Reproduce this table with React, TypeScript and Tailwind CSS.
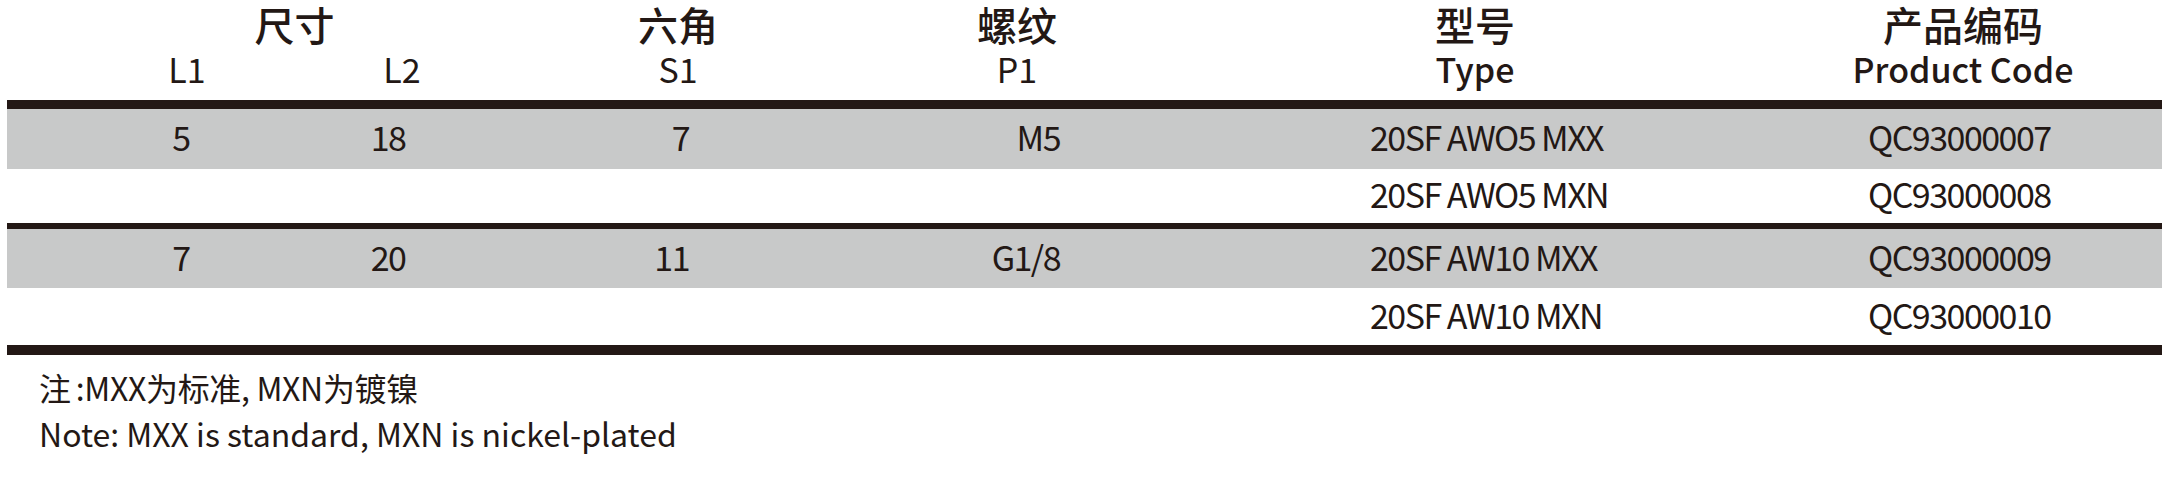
import React from "react";

const headCols = [
  { en: "L1", cls: "ml-[80px] w-[200px] font-normal" },
  { en: "L2", cls: "ml-[15px] w-[200px] font-normal" },
  { en: "S1", cls: "ml-[76px] w-[200px] font-normal" },
  { en: "P1", cls: "ml-[139px] w-[200px] font-normal" },
  { en: "Type", cls: "ml-[208px] w-[300px] font-medium" },
  { en: "Product Code", cls: "ml-[188px] w-[300px] font-medium" },
];

const bodyCols = [
  "ml-[74px] w-[200px] text-center",
  "ml-[7px] w-[200px] text-center",
  "ml-[1px] w-[200px] text-right",
  "ml-[171px] w-[200px] text-right",
  "ml-[310px] w-[400px] text-left",
  "ml-[98px] w-[300px] text-left",
];

const groups = [
  {
    spec: ["5", "18", "7", "M5"],
    rows: [
      ["20SF AWO5 MXX", "QC93000007"],
      ["20SF AWO5 MXN", "QC93000008"],
    ],
  },
  {
    spec: ["7", "20", "11", "G1/8"],
    rows: [
      ["20SF AW10 MXX", "QC93000009"],
      ["20SF AW10 MXN", "QC93000010"],
    ],
  },
];

function Row({ cells, gray, h }: { cells: string[]; gray: boolean; h: string }) {
  return (
    <div className={`flex items-center pb-[4px] ${h} ${gray ? "bg-[#c8c9c9]" : "bg-white"}`}>
      {bodyCols.map((cls, i) => (
        <div key={i} className={`${cls} shrink-0 leading-[40px]`}>
          {cells[i] ?? ""}
        </div>
      ))}
    </div>
  );
}

export default function App() {
  return (
    <div className="w-[2164px] h-[494px] bg-white text-[#231815] font-['Noto_Sans_CJK_SC',sans-serif] overflow-hidden">
      <div className="ml-[7px] w-[2155px]">
        {/* header */}
        <div className="h-[100px] pt-[1px]">
          <div className="flex h-[46px] text-[40px] leading-[46px] font-medium">
            <div className="ml-[80px] w-[415px] text-center shrink-0">尺寸</div>
            <div className="ml-[76px] w-[200px] text-center shrink-0">六角</div>
            <div className="ml-[139px] w-[200px] text-center shrink-0">螺纹</div>
            <div className="ml-[208px] w-[300px] text-center shrink-0">型号</div>
            <div className="ml-[188px] w-[300px] text-center shrink-0">产品编码</div>
          </div>
          <div className="flex h-[44px] text-[34px] leading-[44px]">
            {headCols.map((c, i) => (
              <div key={i} className={`${c.cls} text-center shrink-0`}>
                {c.en}
              </div>
            ))}
          </div>
        </div>

        {/* body */}
        <div className="text-[34px] tracking-[-0.045em]">
          <div className="h-[9px] bg-[#231815]" />
          <Row cells={[...groups[0].spec, ...groups[0].rows[0]]} gray h="h-[60px]" />
          <Row cells={["", "", "", "", ...groups[0].rows[1]]} gray={false} h="h-[54px]" />
          <div className="h-[6px] bg-[#231815]" />
          <Row cells={[...groups[1].spec, ...groups[1].rows[0]]} gray h="h-[59px]" />
          <Row cells={["", "", "", "", ...groups[1].rows[1]]} gray={false} h="h-[57px]" />
          <div className="h-[10px] bg-[#231815]" />
        </div>
      </div>

      {/* note */}
      <div className="ml-[39px] mt-[9px] text-[32px] leading-[46px]">
        <div className="tracking-[-0.01em]">
          注<span className="ml-[5px]">:</span>MXX为标准, MXN为镀镍
        </div>
        <div>Note: MXX is standard, MXN is nickel-plated</div>
      </div>
    </div>
  );
}
